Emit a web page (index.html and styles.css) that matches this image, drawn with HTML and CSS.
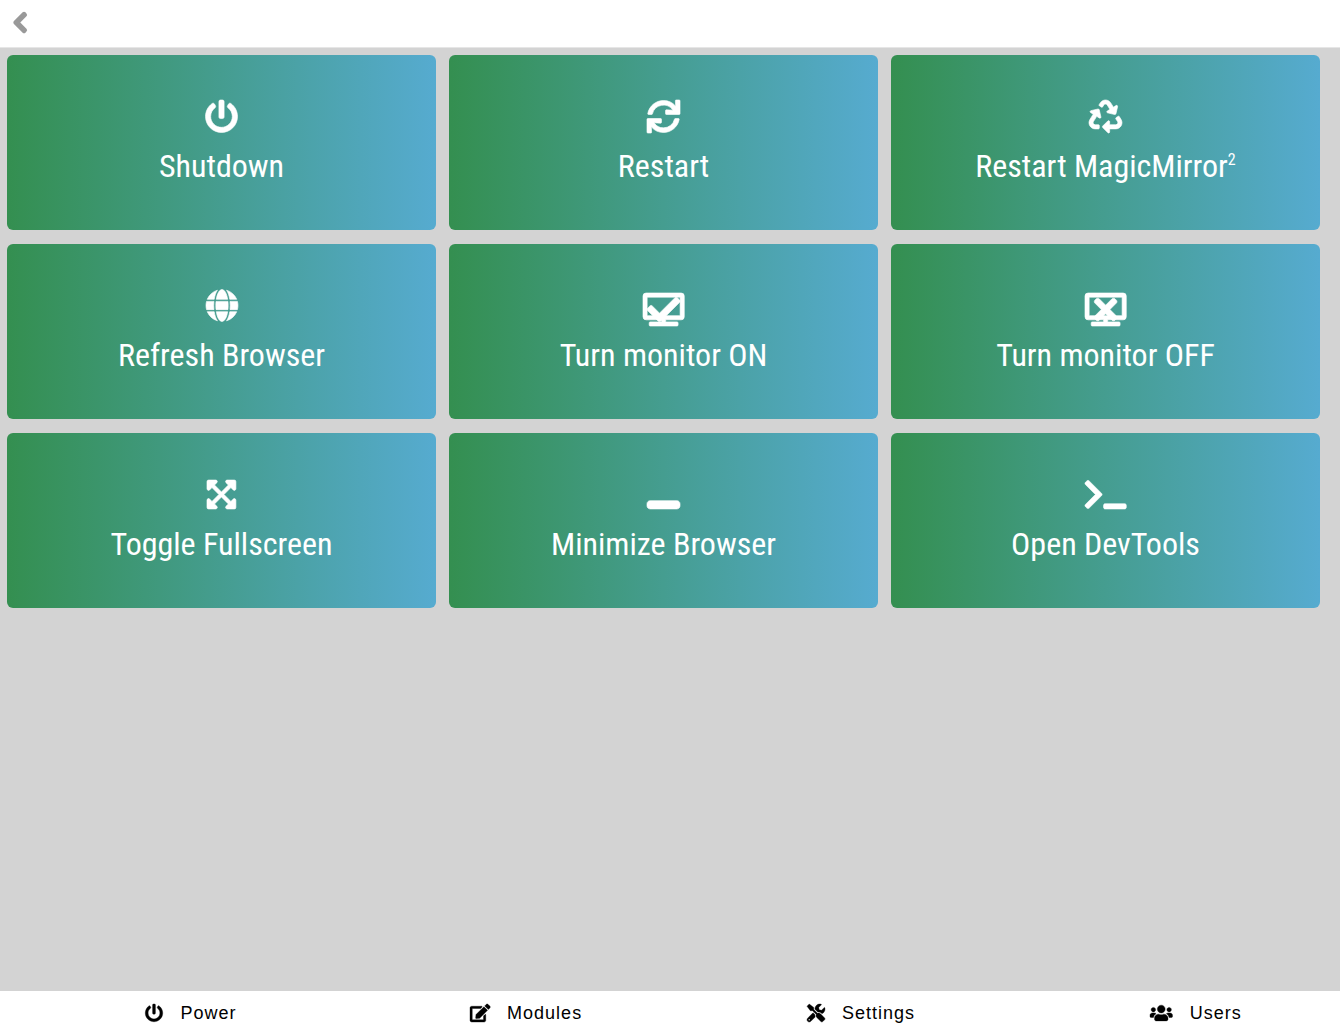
FILE: index.html
```html
<!DOCTYPE html>
<html lang="en">
<head>
<meta charset="utf-8">
<meta name="viewport" content="width=device-width, initial-scale=1">
<title>Remote Control</title>
<link rel="stylesheet" href="styles.css">
</head>
<body>
<header class="topbar">
  <button class="back" type="button" aria-label="Back"><svg class="icon" viewBox="0 0 320 512" aria-hidden="true"><path d="M34.52 239.03L228.87 44.69c9.37-9.37 24.57-9.37 33.94 0l22.67 22.67c9.36 9.36 9.37 24.52.04 33.9L131.49 256l154.02 154.75c9.34 9.38 9.32 24.54-.04 33.9l-22.67 22.67c-9.37 9.37-24.57 9.37-33.94 0L34.52 272.97c-9.37-9.37-9.37-24.57 0-33.94z"/></svg></button>
</header>
<main class="content">
  <div class="tiles">
    <button class="tile" type="button">
      <svg class="icon" viewBox="0 0 512 512" aria-hidden="true"><path d="M400 54.1c63 45 104 118.6 104 201.9 0 136.8-110.8 247.7-247.5 248C120 504.3 8.2 393 8 256.4 7.9 173.1 48.9 99.3 111.8 54.2c11.7-8.3 28-4.8 35 7.7L162.6 90c5.9 10.5 3.1 23.8-6.6 31-41.5 30.8-68 79.6-68 134.9-.1 92.3 74.5 168.1 168 168.1 91.6 0 168.6-74.2 168-169.1-.3-51.8-24.7-101.8-68.1-134-9.7-7.2-12.4-20.5-6.5-30.9l15.8-28.1c7-12.4 23.2-16.1 34.8-7.8zM296 264V24c0-13.3-10.7-24-24-24h-32c-13.3 0-24 10.7-24 24v240c0 13.3 10.7 24 24 24h32c13.3 0 24-10.7 24-24z"/></svg>
      <span class="label">Shutdown</span>
    </button>
    <button class="tile" type="button">
      <svg class="icon" viewBox="0 0 512 512" aria-hidden="true"><path d="M440.65 12.57l4 82.77A247.16 247.16 0 0 0 255.83 8C134.73 8 33.91 94.92 12.29 209.82A12 12 0 0 0 24.09 224h49.05a12 12 0 0 0 11.67-9.26 175.91 175.91 0 0 1 317-56.94l-101.46-4.86a12 12 0 0 0-12.57 12v47.41a12 12 0 0 0 12 12H500a12 12 0 0 0 12-12V12a12 12 0 0 0-12-12h-47.37a12 12 0 0 0-11.98 12.57zM255.83 432a175.61 175.61 0 0 1-146-77.8l101.8 4.87a12 12 0 0 0 12.57-12v-47.4a12 12 0 0 0-12-12H12a12 12 0 0 0-12 12V500a12 12 0 0 0 12 12h47.35a12 12 0 0 0 12-12.6l-4.15-82.57A247.17 247.17 0 0 0 255.83 504c121.11 0 221.93-86.92 243.55-201.82a12 12 0 0 0-11.8-14.18h-49.05a12 12 0 0 0-11.67 9.26A175.86 175.86 0 0 1 255.83 432z"/></svg>
      <span class="label">Restart</span>
    </button>
    <button class="tile" type="button">
      <svg class="icon" viewBox="0 0 512 512" aria-hidden="true"><path d="M184.561 261.903c3.232 13.997-12.123 24.635-24.068 17.168l-40.736-25.455-50.867 81.402C55.606 356.273 70.96 384 96.012 384H148c6.627 0 12 5.373 12 12v40c0 6.627-5.373 12-12 12H96.115c-75.334 0-121.302-83.048-81.408-146.88l50.822-81.388-40.725-25.448c-12.081-7.547-8.966-25.961 4.879-29.158l110.237-25.45c8.611-1.988 17.201 3.381 19.189 11.99l25.452 110.237zm98.561-182.915l41.289 66.076-40.74 25.457c-12.051 7.528-9 25.953 4.879 29.158l110.237 25.45c8.672 1.999 17.215-3.438 19.189-11.99l25.45-110.237c3.197-13.844-11.99-24.719-24.068-17.168l-40.687 25.424-41.263-66.082c-37.521-60.033-125.209-60.171-162.816 0l-17.963 28.766c-3.51 5.62-1.8 13.021 3.82 16.533l33.919 21.195c5.62 3.512 13.024 1.803 16.536-3.817l17.961-28.743c12.712-20.341 41.973-19.676 54.257-.022zM497.288 301.12l-27.515-44.065c-3.511-5.623-10.916-7.334-16.538-3.821l-33.861 21.159c-5.62 3.512-7.33 10.915-3.818 16.536l27.564 44.112c13.257 21.211-2.057 48.96-27.136 48.96H320V336.02c0-14.213-17.242-21.383-27.313-11.313l-80 79.981c-6.249 6.248-6.249 16.379 0 22.627l80 79.989C302.689 517.308 320 510.3 320 495.989V448h95.88c75.274 0 121.335-82.997 81.408-146.88z"/></svg>
      <span class="label">Restart MagicMirror<sup>2</sup></span>
    </button>
    <button class="tile" type="button">
      <svg class="icon" viewBox="0 0 496 512" aria-hidden="true"><path d="M336.5 160C322 70.7 287.8 8 248 8s-74 62.7-88.5 152h177zM152 256c0 22.2 1.2 43.5 3.3 64h185.3c2.1-20.5 3.3-41.8 3.3-64s-1.2-43.5-3.3-64H155.3c-2.1 20.5-3.3 41.8-3.3 64zm324.7-96c-28.6-67.9-86.5-120.4-158-141.6 24.4 33.8 41.2 84.7 50 141.6h108zM177.2 18.4C105.8 39.6 47.8 92.1 19.3 160h108c8.7-56.9 25.5-107.8 49.9-141.6zM487.4 192H372.7c2.1 21 3.3 42.5 3.3 64s-1.2 43-3.3 64h114.6c5.5-20.5 8.6-41.8 8.6-64s-3.1-43.5-8.5-64zM120 256c0-21.5 1.2-43 3.3-64H8.6C3.2 212.5 0 233.8 0 256s3.2 43.5 8.6 64h114.6c-2-21-3.2-42.5-3.2-64zm39.5 96c14.5 89.3 48.7 152 88.5 152s74-62.7 88.5-152h-177zm159.3 141.6c71.4-21.2 129.4-73.7 158-141.6h-108c-8.8 56.9-25.6 107.8-50 141.6zM19.3 352c28.6 67.9 86.5 120.4 158 141.6-24.4-33.8-41.2-84.7-50-141.6h-108z"/></svg>
      <span class="label">Refresh Browser</span>
    </button>
    <button class="tile tile-monitor" type="button">
      <svg class="icon" viewBox="0 0 640 512" aria-hidden="true"><path d="M592 0H48A48 48 0 0 0 0 48v320a48 48 0 0 0 48 48h240v32H112a16 16 0 0 0-16 16v32a16 16 0 0 0 16 16h416a16 16 0 0 0 16-16v-32a16 16 0 0 0-16-16H352v-32h240a48 48 0 0 0 48-48V48a48 48 0 0 0-48-48zm-16 352H64V64h512z"/><path transform="translate(64 0)" d="M173.898 439.404l-166.4-166.4c-9.997-9.997-9.997-26.206 0-36.204l36.203-36.204c9.997-9.998 26.207-9.998 36.204 0L192 312.69 432.095 72.596c9.997-9.997 26.207-9.997 36.204 0l36.203 36.204c9.997 9.997 9.997 26.206 0 36.204l-294.4 294.401c-9.998 9.997-26.207 9.997-36.204-.001z"/></svg>
      <span class="label">Turn monitor ON</span>
    </button>
    <button class="tile tile-monitor" type="button">
      <svg class="icon" viewBox="0 0 640 512" aria-hidden="true"><path d="M592 0H48A48 48 0 0 0 0 48v320a48 48 0 0 0 48 48h240v32H112a16 16 0 0 0-16 16v32a16 16 0 0 0 16 16h416a16 16 0 0 0 16-16v-32a16 16 0 0 0-16-16H352v-32h240a48 48 0 0 0 48-48V48a48 48 0 0 0-48-48zm-16 352H64V64h512z"/><path transform="translate(144 0)" d="M242.72 256l100.07-100.07c12.28-12.28 12.28-32.19 0-44.48l-22.24-22.24c-12.28-12.28-32.19-12.28-44.48 0L176 189.28 75.93 89.21c-12.28-12.28-32.19-12.28-44.48 0L9.21 111.45c-12.28 12.28-12.28 32.19 0 44.48L109.28 256 9.21 356.07c-12.28 12.28-12.28 32.19 0 44.48l22.24 22.24c12.28 12.28 32.2 12.28 44.48 0L176 322.72l100.07 100.07c12.28 12.28 32.2 12.28 44.48 0l22.24-22.24c12.28-12.28 12.28-32.19 0-44.48L242.72 256z"/></svg>
      <span class="label">Turn monitor OFF</span>
    </button>
    <button class="tile" type="button">
      <svg class="icon" viewBox="0 0 448 512" aria-hidden="true"><path d="M448 344v112a23.94 23.94 0 0 1-24 24H312c-21.39 0-32.09-25.9-17-41l36.2-36.2L224 295.6 116.77 402.9 153 439c15.09 15.1 4.39 41-17 41H24a23.94 23.94 0 0 1-24-24V344c0-21.4 25.89-32.1 41-17l36.19 36.2L184.46 256 77.18 148.7 41 185c-15.1 15.1-41 4.4-41-17V56a23.94 23.94 0 0 1 24-24h112c21.39 0 32.09 25.9 17 41l-36.2 36.2L224 216.4l107.23-107.3L295 73c-15.09-15.1-4.39-41 17-41h112a23.94 23.94 0 0 1 24 24v112c0 21.4-25.89 32.1-41 17l-36.19-36.2L263.54 256l107.28 107.3L407 327.1c15.1-15.2 41-4.5 41 16.9z"/></svg>
      <span class="label">Toggle Fullscreen</span>
    </button>
    <button class="tile" type="button">
      <svg class="icon" viewBox="0 0 512 512" aria-hidden="true"><path d="M464 352H48c-26.5 0-48 21.5-48 48v32c0 26.5 21.5 48 48 48h416c26.5 0 48-21.5 48-48v-32c0-26.5-21.5-48-48-48z"/></svg>
      <span class="label">Minimize Browser</span>
    </button>
    <button class="tile" type="button">
      <svg class="icon" viewBox="0 0 640 512" aria-hidden="true"><path d="M257.981 272.971L63.638 467.314c-9.373 9.373-24.569 9.373-33.941 0L7.029 444.647c-9.357-9.357-9.375-24.522-.04-33.901L161.011 256 6.99 101.255c-9.335-9.379-9.317-24.544.04-33.901l22.667-22.667c9.373-9.373 24.569-9.373 33.941 0L257.981 239.03c9.373 9.372 9.373 24.568 0 33.941zM640 456v-32c0-13.255-10.745-24-24-24H312c-13.255 0-24 10.745-24 24v32c0 13.255 10.745 24 24 24h304c13.255 0 24-10.745 24-24z"/></svg>
      <span class="label">Open DevTools</span>
    </button>
  </div>
</main>
<nav class="bottombar" aria-label="Sections">
  <a class="nav-item" href="#power"><svg class="icon" viewBox="0 0 512 512" aria-hidden="true"><path d="M400 54.1c63 45 104 118.6 104 201.9 0 136.8-110.8 247.7-247.5 248C120 504.3 8.2 393 8 256.4 7.9 173.1 48.9 99.3 111.8 54.2c11.7-8.3 28-4.8 35 7.7L162.6 90c5.9 10.5 3.1 23.8-6.6 31-41.5 30.8-68 79.6-68 134.9-.1 92.3 74.5 168.1 168 168.1 91.6 0 168.6-74.2 168-169.1-.3-51.8-24.7-101.8-68.1-134-9.7-7.2-12.4-20.5-6.5-30.9l15.8-28.1c7-12.4 23.2-16.1 34.8-7.8zM296 264V24c0-13.3-10.7-24-24-24h-32c-13.3 0-24 10.7-24 24v240c0 13.3 10.7 24 24 24h32c13.3 0 24-10.7 24-24z"/></svg>Power</a>
  <a class="nav-item" href="#modules"><svg class="icon" viewBox="0 0 576 512" aria-hidden="true"><path d="M402.6 83.2l90.2 90.2c3.8 3.8 3.8 10 0 13.8L274.4 405.6l-92.8 10.3c-12.4 1.4-22.9-9.1-21.5-21.5l10.3-92.8L388.8 83.2c3.8-3.8 10-3.8 13.8 0zm162-22.9l-48.8-48.8c-15.2-15.2-39.9-15.2-55.2 0l-35.4 35.4c-3.8 3.8-3.8 10 0 13.8l90.2 90.2c3.8 3.8 10 3.8 13.8 0l35.4-35.4c15.2-15.3 15.2-40 0-55.2zM384 346.2V448H64V128h229.8c3.2 0 6.2-1.3 8.5-3.5l40-40c7.6-7.6 2.2-20.5-8.5-20.5H48C21.5 64 0 85.5 0 112v352c0 26.5 21.5 48 48 48h352c26.5 0 48-21.5 48-48V306.2c0-10.7-12.9-16-20.5-8.5l-40 40c-2.2 2.3-3.5 5.3-3.5 8.5z"/></svg>Modules</a>
  <a class="nav-item" href="#settings"><svg class="icon" viewBox="0 0 512 512" aria-hidden="true"><path d="M501.1 395.7L384 278.6c-23.1-23.1-57.6-27.6-85.4-13.9L192 158.1V96L64 0 0 64l96 128h62.1l106.6 106.6c-13.6 27.8-9.2 62.3 13.9 85.4l117.1 117.1c14.6 14.6 38.2 14.6 52.7 0l52.7-52.7c14.5-14.6 14.5-38.2 0-52.7zM331.7 225c28.3 0 54.9 11 74.9 31l19.4 19.4c15.8-6.9 30.8-16.5 43.8-29.5 37.1-37.1 49.7-89.3 37.9-136.7-2.2-9-13.5-12.1-20.1-5.5l-74.4 74.4-67.9-11.3L334 98.9l74.4-74.4c6.6-6.6 3.4-17.9-5.7-20.2-47.4-11.7-99.6.9-136.6 37.9-28.5 28.5-41.9 66.1-41.2 103.6l82.1 82.1c8.1-1.9 16.5-2.9 24.7-2.9zm-103.9 82l-56.7-56.7L18.7 402.8c-25 25-25 65.5 0 90.5s65.5 25 90.5 0l123.6-123.6c-7.6-19.9-9.9-41.6-5-62.7zM64 472c-13.2 0-24-10.8-24-24 0-13.3 10.7-24 24-24s24 10.7 24 24c0 13.2-10.7 24-24 24z"/></svg>Settings</a>
  <a class="nav-item" href="#users"><svg class="icon" viewBox="0 0 640 512" aria-hidden="true"><path d="M96 224c35.3 0 64-28.7 64-64s-28.7-64-64-64-64 28.7-64 64 28.7 64 64 64zm448 0c35.3 0 64-28.7 64-64s-28.7-64-64-64-64 28.7-64 64 28.7 64 64 64zm32 32h-64c-17.6 0-33.5 7.1-45.1 18.6 40.3 22.1 68.9 62 75.1 109.4h66c17.7 0 32-14.3 32-32v-32c0-35.3-28.7-64-64-64zm-256 0c61.9 0 112-50.1 112-112S381.9 32 320 32 208 82.1 208 144s50.1 112 112 112zm76.8 32h-8.3c-20.8 10-43.9 16-68.5 16s-47.6-6-68.5-16h-8.3C179.6 288 128 339.6 128 403.2V432c0 26.5 21.5 48 48 48h288c26.5 0 48-21.5 48-48v-28.8c0-63.6-51.6-115.2-115.2-115.2zm-223.7-13.4C161.5 263.1 145.6 256 128 256H64c-35.3 0-64 28.7-64 64v32c0 17.7 14.3 32 32 32h65.9c6.3-47.4 34.9-87.3 75.2-109.4z"/></svg>Users</a>
</nav>
</body>
</html>
```
FILE: styles.css
```css
* {
  box-sizing: border-box;
}

body {
  margin: 0;
  min-height: 100vh;
  display: flex;
  flex-direction: column;
  background: #d3d3d3;
  font-family: "Liberation Sans", Arial, sans-serif;
}

.icon {
  display: block;
  flex: none;
  width: auto;
  overflow: visible;
  fill: currentColor;
  stroke: currentColor;
  stroke-width: 10;
  stroke-linejoin: round;
}

.topbar {
  display: flex;
  align-items: center;
  height: 48px;
  padding: 0 13px 3px;
  background: #fff;
  border-bottom: 1px solid #e6e6e6;
}

.back {
  padding: 0;
  border: 0;
  background: none;
  color: #999;
}

.back .icon {
  height: 23px;
  stroke-width: 40;
}

.content {
  flex: 1;
  padding: 7px 20px 7px 7px;
}

.tiles {
  display: grid;
  grid-template-columns: repeat(3, minmax(0, 1fr));
  gap: 14px 13px;
}

.tile {
  display: flex;
  flex-direction: column;
  align-items: center;
  height: 175px;
  padding: 45px 12px 0;
  border: 0;
  border-radius: 6px;
  background: linear-gradient(to right, #348f50, #56abd0);
  color: #fff;
  font-family: "Roboto Condensed", Roboto, sans-serif;
  font-size: 32px;
  line-height: 40px;
}

.tile .icon {
  height: 33px;
  margin-bottom: 13px;
}

.tile-monitor .icon {
  margin-top: 4px;
  margin-bottom: 9px;
}

.label sup {
  font-size: 16px;
  line-height: 0;
}

.bottombar {
  display: grid;
  grid-template-columns: repeat(4, minmax(0, 1fr));
  height: 43px;
  background: #fff;
}

.nav-item {
  display: flex;
  align-items: center;
  justify-content: center;
  gap: 17px;
  padding: 1px 0 0 47px;
  color: #000;
  font-size: 18px;
  letter-spacing: 1px;
  text-decoration: none;
}

.nav-item .icon {
  height: 18px;
}
```
